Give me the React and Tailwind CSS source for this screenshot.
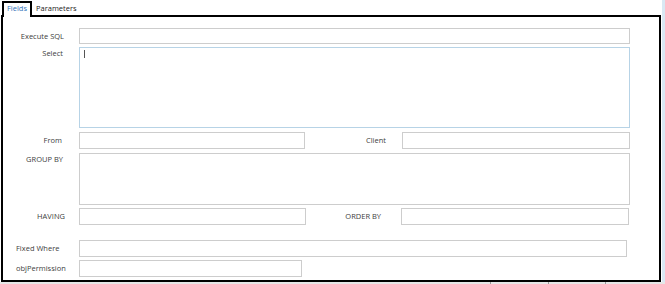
const FONT = { fontFamily: '"Open Sans", "Noto Sans", sans-serif' };

function Label({ children, className = "" }) {
  return (
    <div className={`shrink-0 text-[7.5px] leading-[11px] text-[#404040] ${className}`}>
      {children}
    </div>
  );
}

function Box({ className = "" }) {
  return <div className={`shrink-0 border border-[#cdcdcd] bg-white ${className}`} />;
}

export default function App() {
  return (
    <div
      className="relative h-[284px] w-[665px] overflow-hidden bg-white"
      style={FONT}
    >
      {/* tabs */}
      <div className="flex h-[15px] items-end pl-[2px]">
        <div className="relative z-10 -mb-[2px] flex h-[16px] w-[30px] items-start border-x-2 border-t-2 border-black bg-white pl-[3px] text-[7.5px] leading-[11px] text-[#2f72b8]">
          Fields
        </div>
        <div className="mb-[1px] pl-[4px] text-[7.5px] leading-[11px] text-[#222]">
          Parameters
        </div>
      </div>

      {/* panel */}
      <div className="ml-[1px] flex h-[267px] w-[660px] flex-col border-2 border-black bg-white">
        {/* Execute SQL */}
        <div className="mt-[11px] flex h-[16px] items-center">
          <Label className="w-[76px] pr-[15px] text-right">Execute SQL</Label>
          <Box className="h-[16px] w-[551px]" />
        </div>

        {/* Select */}
        <div className="mt-[3px] flex h-[81px] items-start">
          <Label className="w-[76px] pr-[16px] pt-[1px] text-right">Select</Label>
          <div className="relative h-[81px] w-[551px] shrink-0 border border-[#b7d3e6] bg-white">
            <div className="absolute left-[4px] top-[2px] h-[8px] w-[1px] bg-[#555]" />
          </div>
        </div>

        {/* From / Client */}
        <div className="mt-[4px] flex h-[17px] items-center">
          <Label className="w-[76px] pr-[17px] text-right">From</Label>
          <Box className="h-[17px] w-[226px]" />
          <Label className="w-[97px] pr-[16px] text-right">Client</Label>
          <Box className="h-[17px] w-[228px]" />
        </div>

        {/* GROUP BY */}
        <div className="mt-[4px] flex h-[52px] items-start">
          <Label className="w-[76px] pr-[16px] pt-[1px] text-right">GROUP BY</Label>
          <Box className="h-[52px] w-[551px]" />
        </div>

        {/* HAVING / ORDER BY */}
        <div className="mt-[3px] flex h-[17px] items-center">
          <Label className="w-[76px] pr-[14px] text-right">HAVING</Label>
          <Box className="h-[17px] w-[227px]" />
          <Label className="w-[95px] pr-[20px] text-right">ORDER BY</Label>
          <Box className="h-[17px] w-[228px]" />
        </div>

        {/* Fixed Where */}
        <div className="mt-[15px] flex h-[17px] items-center">
          <Label className="w-[76px] pl-[13px]">Fixed Where</Label>
          <Box className="h-[17px] w-[548px]" />
        </div>

        {/* objPermission */}
        <div className="mt-[3px] flex h-[17px] items-center">
          <Label className="w-[76px] pl-[13px]">objPermission</Label>
          <Box className="h-[17px] w-[223px]" />
        </div>
      </div>

      {/* window edges */}
      <div className="absolute right-0 top-0 h-full w-[3px] bg-[#d9e8f3]" />
      <div className="absolute bottom-0 left-0 flex h-[2px] w-full bg-[#e6e6e6]">
        <div className="ml-[490px] h-full w-[1px] bg-[#999]" />
        <div className="ml-[57px] h-full w-[1px] bg-[#999]" />
        <div className="ml-[56px] h-full w-[1px] bg-[#999]" />
      </div>
    </div>
  );
}
